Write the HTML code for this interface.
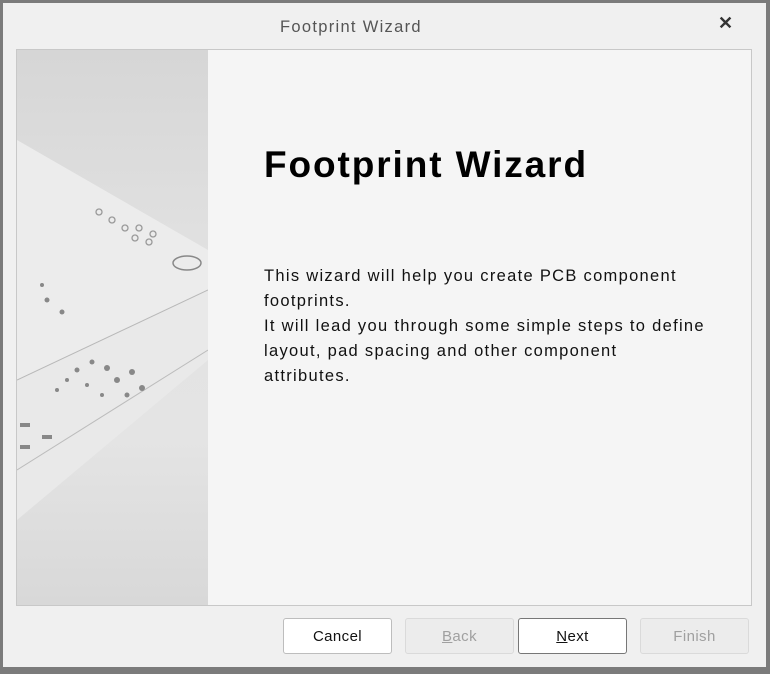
<!DOCTYPE html>
<html><head><style>
body{margin:0;width:770px;height:674px;background:#7b7b7b;font-family:"Liberation Sans",sans-serif;overflow:hidden}
.win{position:absolute;left:3px;top:3px;width:763px;height:664px;background:#f0f0f0}
.title{position:absolute;left:277px;top:15px;font-size:16.5px;letter-spacing:1.3px;color:#555}
.x{position:absolute;left:715px;top:10px;font-size:18px;font-weight:bold;color:#333}
.panel{position:absolute;left:13px;top:46px;width:734px;height:555px;border:1px solid #c8c8c8;background:#f5f5f5;overflow:hidden}
.side{position:absolute;left:0;top:0;width:191px;height:555px;background:linear-gradient(180deg,#d6d6d6 0%,#e2e2e2 40%,#e4e4e4 70%,#d8d8d8 100%)}
h1{position:absolute;left:247px;top:94px;margin:0;font-size:37px;letter-spacing:1.9px;font-weight:bold;color:#000}
.txt{position:absolute;left:247px;top:214px;font-size:16.5px;letter-spacing:1.3px;line-height:25px;color:#111;width:490px}
.btn{position:absolute;top:615px;width:109px;height:36px;border:1px solid #bdbdbd;border-radius:3px;background:#fff;font-size:15px;letter-spacing:0.4px;text-align:center;line-height:36px;color:#111;box-sizing:border-box}
.dis{background:#ececec;border-color:#dadada;color:#a0a0a0}
</style></head><body>
<div class="win">
<div class="title">Footprint Wizard</div>
<div class="x">✕</div>
<div class="panel">
<div class="side">
<svg width="191" height="555" viewBox="0 0 191 555">
<polygon points="0,90 191,200 191,240 0,330" fill="#ececec"/>
<polygon points="0,330 191,240 191,310 0,470" fill="#e9e9e9"/>
<line x1="0" y1="330" x2="191" y2="240" stroke="#b8b8b8"/>
<line x1="0" y1="420" x2="191" y2="300" stroke="#bcbcbc"/>
<ellipse cx="170" cy="213" rx="14" ry="7" fill="none" stroke="#888" stroke-width="1.5"/>
<g fill="none" stroke="#999" stroke-width="1.3">
<circle cx="108" cy="178" r="3"/><circle cx="122" cy="178" r="3"/><circle cx="136" cy="184" r="3"/><circle cx="118" cy="188" r="3"/><circle cx="132" cy="192" r="3"/>
<circle cx="95" cy="170" r="3"/><circle cx="82" cy="162" r="3"/>
</g>
<g fill="#888">
<circle cx="60" cy="320" r="2.5"/><circle cx="75" cy="312" r="2.5"/><circle cx="90" cy="318" r="3"/><circle cx="100" cy="330" r="3"/><circle cx="115" cy="322" r="3"/><circle cx="70" cy="335" r="2"/><circle cx="85" cy="345" r="2"/><circle cx="110" cy="345" r="2.5"/><circle cx="125" cy="338" r="3"/><circle cx="50" cy="330" r="2"/><circle cx="40" cy="340" r="2"/><circle cx="30" cy="250" r="2.5"/><circle cx="45" cy="262" r="2.5"/><circle cx="25" cy="235" r="2"/>
<rect x="3" y="373" width="10" height="4"/><rect x="3" y="395" width="10" height="4"/><rect x="25" y="385" width="10" height="4"/>
</g>
</svg>
</div>
<h1>Footprint Wizard</h1>
<div class="txt">This wizard will help you create PCB component<br>footprints.<br>It will lead you through some simple steps to define<br>layout, pad spacing and other component<br>attributes.</div>
</div>
<div class="btn" style="left:280px">Cancel</div>
<div class="btn dis" style="left:402px"><u>B</u>ack</div>
<div class="btn" style="left:515px;border-color:#777"><u>N</u>ext</div>
<div class="btn dis" style="left:637px">Finish</div>
</div>
</body></html>
